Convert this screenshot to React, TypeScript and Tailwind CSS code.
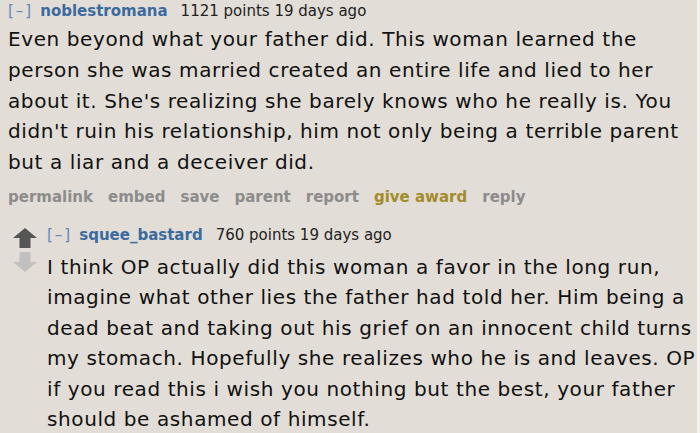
const ACTIONS = ['permalink', 'embed', 'save', 'parent', 'report']

const font = { fontFamily: '"DejaVu Sans", Verdana, sans-serif' }

const FIRST = [
  'Even beyond what your father did. This woman learned the',
  'person she was married created an entire life and lied to her',
  "about it. She's realizing she barely knows who he really is. You",
  "didn't ruin his relationship, him not only being a terrible parent",
  'but a liar and a deceiver did.',
]

const SECOND = [
  'I think OP actually did this woman a favor in the long run,',
  'imagine what other lies the father had told her. Him being a',
  'dead beat and taking out his grief on an innocent child turns',
  'my stomach. Hopefully she realizes who he is and leaves. OP',
  'if you read this i wish you nothing but the best, your father',
  'should be ashamed of himself.',
]

const Header = ({ user, points }: { user: string; points: number }) => (
  <div className="flex items-baseline gap-[9px] text-[15px] leading-[20px]">
    <span className="tracking-[2px] text-[#5f88bd]">[–]</span>
    <span className="-ml-[2px] font-bold text-[#3b6a9f]">{user}</span>
    <span className="ml-[4px] text-[#222]">{points} points 19 days ago</span>
  </div>
)

const Body = ({ lines, lh }: { lines: string[]; lh: string }) => (
  <div className={`text-[20px] tracking-[0.6px] whitespace-nowrap text-[#111] ${lh}`}>
    {lines.map((l) => (
      <p key={l}>{l}</p>
    ))}
  </div>
)

const Arrow = ({ down, color }: { down?: boolean; color: string }) => (
  <svg width="24" height="20" viewBox="0 0 24 20" className={down ? 'rotate-180' : ''}>
    <path d="M12 0 L24 10 L17.5 10 L17.5 20 L6.5 20 L6.5 10 L0 10 Z" fill={color} />
  </svg>
)

export default function App() {
  return (
    <div className="h-[433px] w-[700px] overflow-hidden bg-[#e2ddd6] border-r-[3px] border-[#f4f2ef]" style={font}>
      <div className="pl-[8px] pt-[1px]">
        <Header user="noblestromana" points={1121} />
        <div className="mt-[3px]">
          <Body lines={FIRST} lh="leading-[30.8px]" />
        </div>
        <div className="mt-[9px] flex gap-[15px] text-[15px] font-bold leading-[20px] text-[#8c8c8c]">
          {ACTIONS.map((a) => (
            <span key={a}>{a}</span>
          ))}
          <span className="text-[#a48b2a]">give award</span>
          <span>reply</span>
        </div>
      </div>
      <div className="mt-[18px] flex pl-[13px]">
        <div className="flex w-[34px] flex-col gap-[4px] pt-[3px]">
          <Arrow color="#555" />
          <Arrow down color="#c0c0c0" />
        </div>
        <div>
          <Header user="squee_bastard" points={760} />
          <div className="mt-[7px]">
            <Body lines={SECOND} lh="leading-[30.4px]" />
          </div>
        </div>
      </div>
    </div>
  )
}
